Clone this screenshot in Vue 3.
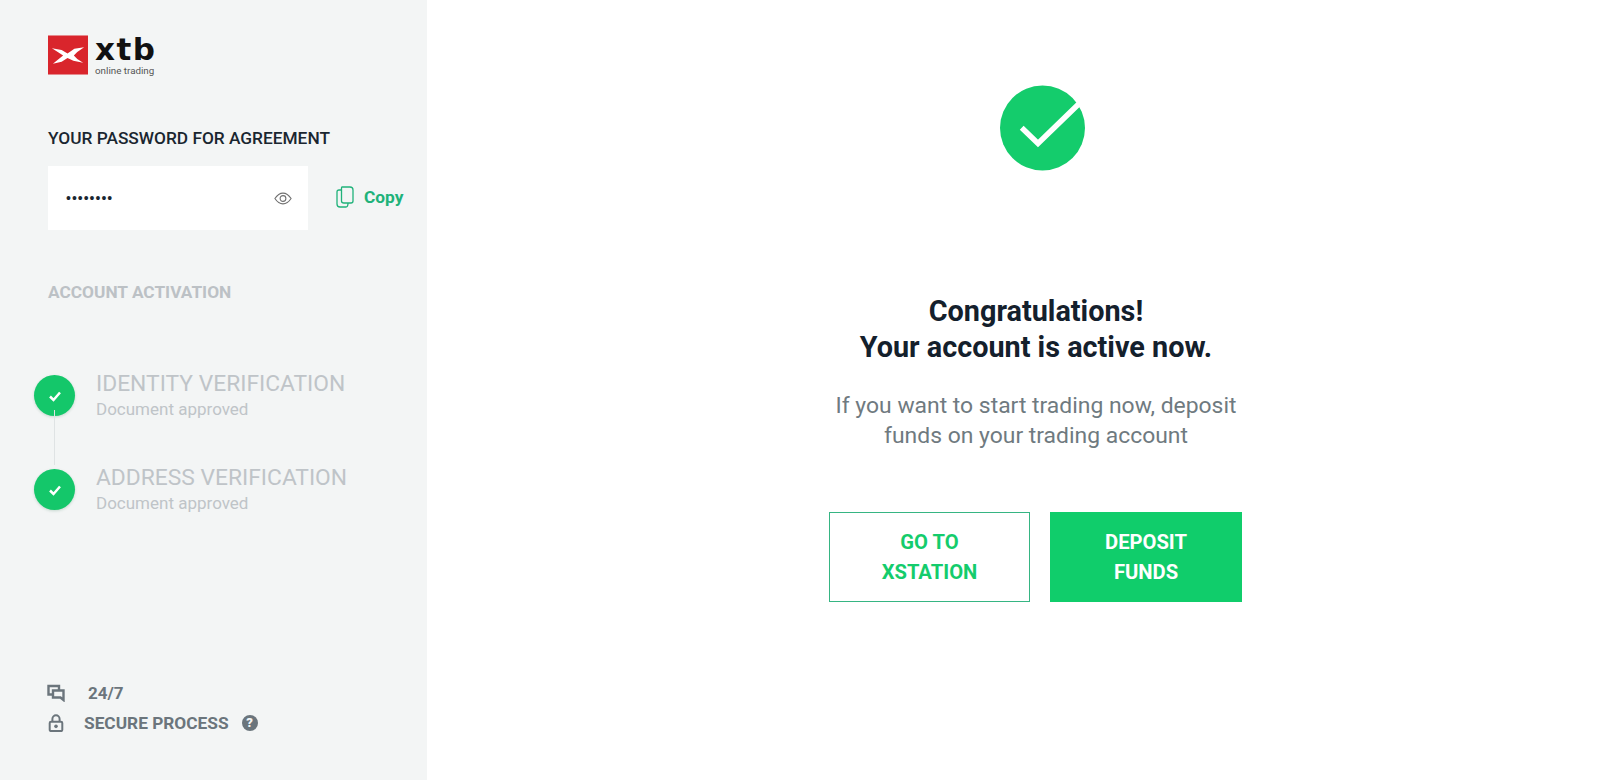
<script setup>
const steps = [
  { title: 'IDENTITY VERIFICATION', sub: 'Document approved' },
  { title: 'ADDRESS VERIFICATION', sub: 'Document approved' }
]
</script>

<template>
  <div class="page">
    <aside class="side">
      <div class="logo">
        <svg class="logo-mark" viewBox="0 0 41 40">
          <rect width="41" height="40" fill="#d9252c" />
          <path d="M4 13 L14 15 L20 18.500 L27 13.500 L37 12 L30 17 L26.500 20.500 L30 24 L36 28 L26 26 L20 23 L14 27 L5 29 L11 24 L15.500 20.500 L10 17 Z" fill="#fff" />
        </svg>
        <div class="logo-text">
          <span class="logo-name">xtb</span>
          <span class="logo-sub">online trading</span>
        </div>
      </div>

      <h2 class="pw-title">YOUR PASSWORD FOR AGREEMENT</h2>
      <div class="pw-row">
        <div class="pw-box">
          <span class="pw-dots">••••••••</span>
          <svg class="eye" viewBox="0 0 20 14" fill="none" stroke="#6f6f6f" stroke-width="1.2">
            <path d="M1 7 C4 2.500 7 1 10 1 C13 1 16 2.500 19 7 C16 11.500 13 13 10 13 C7 13 4 11.500 1 7 Z" />
            <circle cx="10" cy="7" r="3.200" />
          </svg>
        </div>
        <div class="copy">
          <svg class="copy-icon" viewBox="0 0 18 22" fill="none" stroke="#20b27a" stroke-width="1.3">
            <path d="M6 1 H14 Q17 1 17 4 V15 Q17 17 15 17 H8 Q5.500 17 5.500 15 V2 Q5.500 1 6 1 Z" />
            <path d="M5.500 4 H3 Q1 4 1 6 V18 Q1 21 4 21 H10 Q12 21 12 17" />
          </svg>
          <span>Copy</span>
        </div>
      </div>

      <h3 class="act-title">ACCOUNT ACTIVATION</h3>

      <ul class="steps">
        <li v-for="s in steps" :key="s.title" class="step">
          <span class="dot">
            <svg viewBox="0 0 14 12" width="14" height="12" fill="none" stroke="#fff" stroke-width="2.500">
              <path d="M2 6.500 L5.500 10 L12 2.500" />
            </svg>
          </span>
          <div class="step-text">
            <div class="step-title">{{ s.title }}</div>
            <div class="step-sub">{{ s.sub }}</div>
          </div>
        </li>
      </ul>

      <div class="foot">
        <div class="foot-row">
          <svg class="foot-icon" viewBox="0 0 18 17" fill="none" stroke="#6b757c" stroke-width="2.400">
            <path d="M12 6 V1.500 H1.500 V10 H5" />
            <path d="M6 6 H16.500 V15.500 L13.500 13 H6 Z" />
          </svg>
          <span class="foot-247">24/7</span>
        </div>
        <div class="foot-row">
          <svg class="foot-icon" viewBox="0 0 18 20">
            <path d="M5 9 V5.500 A4 4 0 0 1 13 5.500 V9" fill="none" stroke="#6b757c" stroke-width="2.200" />
            <rect x="2" y="8.500" width="14" height="10.500" rx="1.500" fill="none" stroke="#6b757c" stroke-width="2.200" />
            <circle cx="9" cy="13.700" r="2" fill="#6b757c" />
          </svg>
          <span class="foot-sec">SECURE PROCESS</span>
          <span class="help">?</span>
        </div>
      </div>
    </aside>

    <main class="main">
      <svg class="big-check" viewBox="0 0 90 90">
        <circle cx="42.500" cy="43" r="42.500" fill="#14cc6c" />
        <path d="M21.700 42.700 L38 58.500 L80 17.700" fill="none" stroke="#fff" stroke-width="5.500" />
      </svg>
      <div class="body">
        <h1 class="head">Congratulations!<br />Your account is active now.</h1>
        <p class="lead">If you want to start trading now, deposit<br />funds on your trading account</p>
        <div class="btns">
          <button class="btn outline">GO TO<br />XSTATION</button>
          <button class="btn solid">DEPOSIT<br />FUNDS</button>
        </div>
      </div>
    </main>
  </div>
</template>

<style>
html, body { margin: 0; background: #fff; }
</style>

<style scoped>
.page {
  display: flex;
  height: 780px;
  overflow: hidden;
  font-family: Roboto, "Liberation Sans", sans-serif;
  background: #fff;
}
.side {
  width: 427px;
  flex: none;
  box-sizing: border-box;
  background: #f3f5f5;
  padding: 35px 0 0 48px;
  display: flex;
  flex-direction: column;
}
.logo { display: flex; gap: 7px; height: 40px; }
.logo-mark { width: 40px; height: 40px; }
.logo-text { display: flex; flex-direction: column; }
.logo-name {
  font-family: "DejaVu Sans", sans-serif;
  font-weight: 700;
  font-size: 31px;
  line-height: 29px;
  letter-spacing: 1.500px;
  color: #111;
}
.logo-sub { font-size: 9.800px; line-height: 11px; color: #555; margin-top: 1px; }
.pw-title {
  margin: 53px 0 0;
  font-size: 17.300px;
  line-height: 20px;
  font-weight: 500;
  color: #1a2630;
}
.pw-row { display: flex; align-items: center; margin-top: 18px; }
.pw-box {
  width: 260px;
  height: 64px;
  background: #fff;
  display: flex;
  align-items: center;
  justify-content: space-between;
  box-sizing: border-box;
  padding: 0 16px 0 18px;
}
.pw-dots { font-family: "Liberation Sans", sans-serif; font-size: 14px; letter-spacing: 1px; color: #1a2630; }
.eye { width: 18px; height: 13px; }
.copy {
  margin-left: 28px;
  margin-bottom: 3px;
  display: flex;
  align-items: center;
  gap: 10px;
  color: #20b27a;
  font-weight: 700;
  font-size: 17.300px;
}
.copy-icon { width: 18px; height: 22px; }
.act-title {
  margin: 52px 0 0;
  font-size: 17.300px;
  line-height: 20px;
  font-weight: 700;
  color: #bcc1c5;
}
.steps {
  list-style: none;
  margin: 68px 0 0 -14px;
  padding: 0;
  display: flex;
  flex-direction: column;
  gap: 41px;
  position: relative;
}
.steps::before {
  content: "";
  position: absolute;
  left: 20px;
  top: 40px;
  height: 55px;
  width: 1px;
  background: #dfe3e4;
}
.step { display: flex; gap: 21px; align-items: flex-start; height: 53px; }
.dot {
  width: 41px;
  height: 41px;
  margin-top: 5px;
  border-radius: 50%;
  background: #14c76a;
  display: flex;
  align-items: center;
  justify-content: center;
  box-shadow: 0 1px 3px rgba(20, 100, 60, 0.2);
  flex: none;
}
.step-title { font-size: 22.800px; line-height: 27px; color: #bfc4c8; }
.step-sub { font-size: 17px; line-height: 25px; color: #bfc4c8; }
.foot { margin-top: auto; margin-bottom: 47px; display: flex; flex-direction: column; gap: 10px; }
.foot-row { display: flex; align-items: center; height: 20px; color: #6b757c; font-weight: 700; font-size: 17.300px; }
.foot-icon { width: 18px; height: 18px; flex: none; margin-left: -1px; }
.foot-247 { margin-left: 23px; font-size: 17px; }
.foot-sec { margin-left: 19px; font-weight: 700; }
.help {
  margin-left: 13px;
  width: 16px;
  height: 16px;
  border-radius: 50%;
  background: #6b757c;
  color: #f3f5f5;
  font-size: 13px;
  line-height: 16px;
  text-align: center;
  font-weight: 900;
}
.main { flex: 1; position: relative; display: flex; flex-direction: column; }
.big-check {
  width: 90px;
  height: 90px;
  margin: 85px 0 0 573px;
  flex: none;
}
.body { margin-left: 402px; width: 414px; display: flex; flex-direction: column; align-items: center; }
.head {
  margin: 118px 0 0;
  font-size: 28.800px;
  line-height: 36px;
  font-weight: 700;
  color: #14202c;
  text-align: center;
  white-space: nowrap;
}
.lead {
  margin: 26px 0 0;
  font-size: 22.900px;
  line-height: 30px;
  color: #6f7a80;
  text-align: center;
  white-space: nowrap;
}
.btns { display: flex; gap: 20px; margin-top: 61px; width: 100%; }
.btn {
  height: 90px;
  box-sizing: border-box;
  font-family: inherit;
  font-size: 20.200px;
  line-height: 30px;
  font-weight: 700;
  border: 0;
  padding: 0;
}
.outline { width: 201px; background: #fff; border: 1px solid #36b583; color: #14cc6c; }
.solid { width: 192px; background: #10cd6b; color: #fff; }
</style>
